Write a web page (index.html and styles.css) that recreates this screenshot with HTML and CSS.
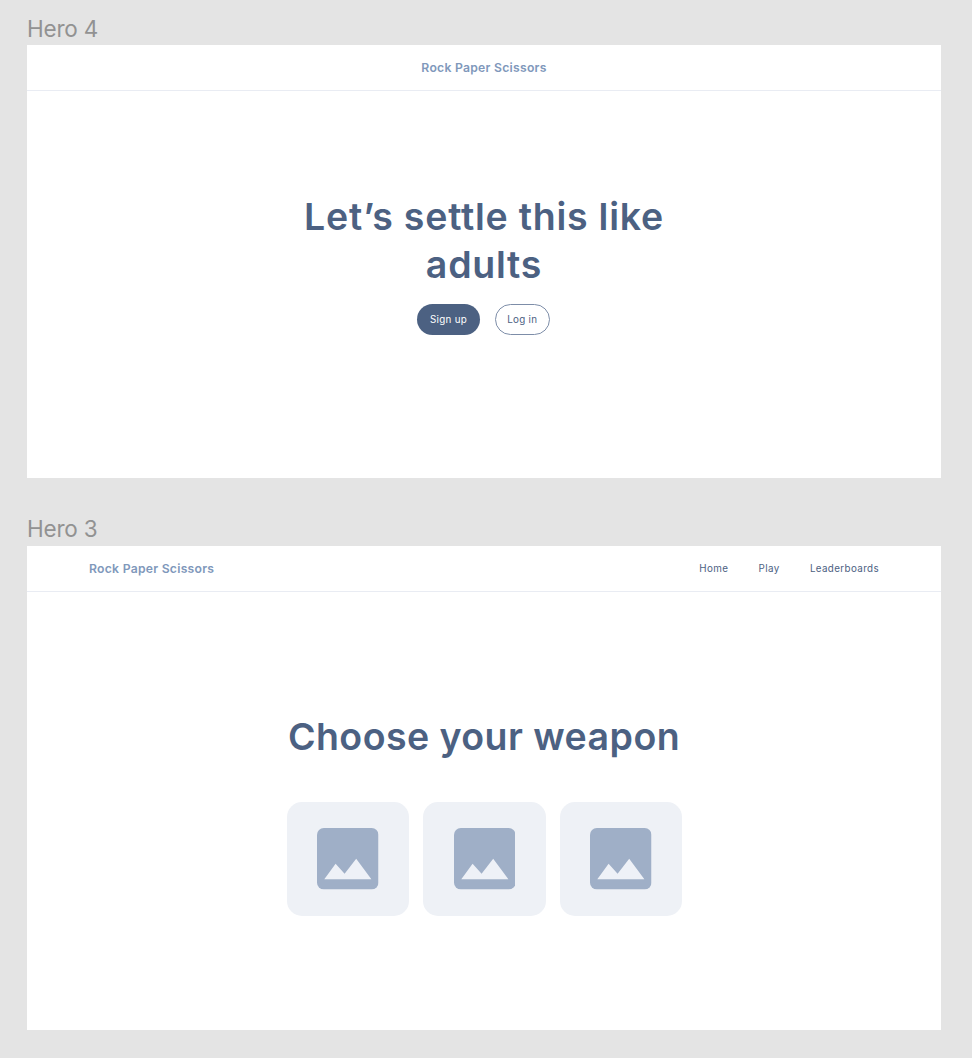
FILE: index.html
```html
<!DOCTYPE html>
<html lang="en">
<head>
<meta charset="utf-8">
<title>Rock Paper Scissors</title>
<link rel="stylesheet" href="styles.css">
</head>
<body>
<svg class="defs" width="0" height="0" aria-hidden="true">
  <symbol id="picture" viewBox="0 0 61.5 61.5">
    <rect width="61.5" height="61.5" rx="6.8" fill="#9fafc7"/>
    <path d="M7.3 51.2 18.6 35.8 27.6 45.8 39.2 30.8 54.4 51.2Z" fill="#eef1f7"/>
  </symbol>
</svg>
<main class="canvas">
  <section class="artboard">
    <h2 class="label">Hero 4</h2>
    <div class="frame frame-welcome">
      <header class="bar bar-center"><span class="brand">Rock Paper Scissors</span></header>
      <h1 class="title title-welcome"><span>Let’s settle this like</span> <span>adults</span></h1>
      <div class="actions">
        <a class="button button-solid">Sign up</a>
        <a class="button button-outline">Log in</a>
      </div>
    </div>
  </section>
  <section class="artboard">
    <h2 class="label label-lower">Hero 3</h2>
    <div class="frame frame-choose">
      <header class="bar">
        <span class="brand">Rock Paper Scissors</span>
        <nav class="links"><a>Home</a><a>Play</a><a>Leaderboards</a></nav>
      </header>
      <h1 class="title title-choose">Choose your weapon</h1>
      <div class="cards">
        <div class="card"><svg class="picture"><use href="#picture"/></svg></div>
        <div class="card"><svg class="picture"><use href="#picture"/></svg></div>
        <div class="card"><svg class="picture"><use href="#picture"/></svg></div>
      </div>
    </div>
  </section>
</main>
</body>
</html>
```
FILE: styles.css
```css
* { box-sizing: border-box; }
body {
  margin: 0;
  background: #e4e4e4;
  font-family: Inter, "Liberation Sans", sans-serif;
  color: #4c6182;
}
.defs { display: block; }
.canvas {
  display: flex;
  flex-direction: column;
  gap: 37px;
  height: 1058px;
  padding: 14px 31px 28px 27px;
}
.label {
  margin: 0;
  height: 31px;
  font-size: 22.5px;
  font-weight: 400;
  line-height: 29px;
  letter-spacing: -0.2px;
  color: #929292;
}
.label-lower { line-height: 28px; }
.frame {
  display: flex;
  flex-direction: column;
  align-items: center;
  background: #fff;
}
.frame-welcome { height: 433px; }
.frame-choose { height: 484px; }
.bar {
  display: flex;
  align-items: center;
  justify-content: space-between;
  align-self: stretch;
  height: 46px;
  padding: 0 62px;
  border-bottom: 1px solid #e9ecf3;
}
.bar-center { justify-content: center; }
.brand {
  font-size: 12.2px;
  font-weight: 600;
  line-height: 20px;
  letter-spacing: 0.26px;
  color: #8098bb;
  padding-top: 1px;
}
.links {
  display: flex;
  gap: 30.3px;
  font-size: 9.8px;
  font-weight: 400;
  letter-spacing: 0.38px;
}
.title {
  display: flex;
  flex-direction: column;
  align-items: center;
  margin: 102px 0 0;
  font-size: 37.5px;
  font-weight: 600;
  line-height: 48px;
  white-space: nowrap;
  font-variant-ligatures: none;
}
.title-welcome { letter-spacing: 0.75px; }
.title-choose { margin-top: 121px; letter-spacing: 0.45px; }
.actions {
  display: flex;
  gap: 15px;
  margin-top: 15px;
  padding-right: 1px;
}
.button {
  display: flex;
  align-items: center;
  justify-content: center;
  height: 30.5px;
  border-radius: 16px;
  font-size: 9.8px;
  letter-spacing: 0.3px;
}
.button-solid { width: 62.5px; background: #4c6182; color: #fff; }
.button-outline { width: 55px; border: 1px solid #7d8da8; }
.cards {
  display: flex;
  gap: 14px;
  margin-top: 41px;
  padding-left: 1px;
}
.card {
  display: flex;
  justify-content: center;
  width: 122.5px;
  height: 114px;
  padding-top: 26.2px;
  border-radius: 15px;
  background: #eef1f6;
}
.picture { width: 61.5px; height: 61.5px; }
```
